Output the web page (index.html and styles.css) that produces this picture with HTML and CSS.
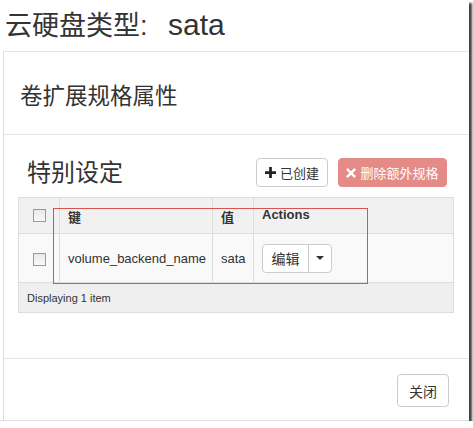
FILE: index.html
```html
<!DOCTYPE html>
<html lang="zh-CN">
<head>
  <meta charset="UTF-8" />
  <title>云硬盘类型: sata</title>
  <link rel="stylesheet" href="styles.css">
</head>
<body>
  <div class="frame">
    <!-- modal header -->
    <div class="modal-title">云硬盘类型: <span class="type-name">sata</span></div>

    <div class="modal-box">
      <div class="section-head">卷扩展规格属性</div>

      <div class="section-body">
        <div class="table-bar">
          <h3 class="table-title">特别设定</h3>
          <div class="table-actions">
            <button class="btn">
              <svg class="ico" viewBox="0 0 12 12" width="11" height="11"><path d="M4.5 0h3v4.5H12v3H7.5V12h-3V7.5H0v-3h4.5z" fill="#222"/></svg>
              已创建
            </button>
            <button class="btn btn-danger" disabled>
              <svg class="ico" viewBox="0 0 12 12" width="10" height="10"><path d="M2 0l4 4 4-4 2 2-4 4 4 4-2 2-4-4-4 4-2-2 4-4-4-4z" fill="#fff"/></svg>
              删除额外规格
            </button>
          </div>
        </div>

        <table class="data-table">
          <colgroup>
            <col style="width: 41px">
            <col style="width: 153px">
            <col style="width: 41px">
            <col style="width: 200px">
          </colgroup>
          <thead>
            <tr>
              <th class="col-check"><span class="checkbox"></span></th>
              <th>键</th>
              <th>值</th>
              <th>Actions</th>
            </tr>
          </thead>
          <tbody>
            <tr>
              <td class="col-check"><span class="checkbox"></span></td>
              <td>volume_backend_name</td>
              <td>sata</td>
              <td>
                <div class="btn-group">
                  <button class="btn btn-sm">编辑</button>
                  <button class="btn btn-sm btn-caret"><span class="caret"></span></button>
                </div>
              </td>
            </tr>
          </tbody>
          <tfoot>
            <tr>
              <td colspan="4">Displaying 1 item</td>
            </tr>
          </tfoot>
        </table>
      </div>

      <div class="modal-footer">
        <button class="btn btn-close">关闭</button>
      </div>
    </div>

    <!-- red annotation box drawn over the table -->
    <div class="mark"></div>
  </div>
</body>
</html>
```

FILE: styles.css
```css
* {
  box-sizing: border-box;
}

body {
  margin: 0;
  background: #fff;
  font-family: "Liberation Sans", "Noto Sans CJK SC", sans-serif;
  color: #333;
}

/* screenshot frame with shadow */
.frame {
  position: relative;
  width: 469px;
  height: 421px;
  border-bottom: 1px solid #ddd;
  box-shadow: 3px 3px 2px rgba(0, 0, 0, 0.75);
  display: flex;
  flex-direction: column;
}

.modal-title {
  height: 51px;
  padding: 9px 0 0 5px;
  font-size: 27px;
  line-height: 32px;
  color: #333;
  white-space: nowrap;
}

.type-name {
  margin-left: 13px;
  font-size: 30px;
}

.modal-box {
  flex: 1;
  margin-left: 3px;
  border-left: 1px solid #ddd;
  border-top: 1px solid #e5e5e5;
  display: flex;
  flex-direction: column;
}

.section-head {
  height: 83px;
  padding: 33px 0 0 16px;
  font-size: 22.5px;
  line-height: 24px;
  border-bottom: 1px solid #e5e5e5;
}

.section-body {
  height: 224px;
  padding: 23px 15px 0 14px;
  border-bottom: 1px solid #e5e5e5;
}

.table-bar {
  display: flex;
  justify-content: space-between;
  align-items: center;
  height: 29px;
  margin-bottom: 10px;
}

.table-title {
  margin: 0 0 0 9px;
  font-size: 24px;
  font-weight: normal;
  line-height: 28px;
}

.table-actions {
  display: flex;
  gap: 10px;
  margin-right: 7px;
}

.btn {
  display: inline-flex;
  align-items: center;
  justify-content: center;
  gap: 4px;
  height: 29px;
  padding: 0;
  font-family: "Liberation Sans", "Noto Sans CJK SC", sans-serif;
  font-size: 13px;
  color: #333;
  white-space: nowrap;
  background: #fff;
  border: 1px solid #ccc;
  border-radius: 4px;
}

.table-actions .btn {
  width: 72px;
}

.table-actions .btn-danger {
  width: 109px;
  color: #fff;
  background: #e48b88;
  border-color: #e48b88;
}

.ico {
  flex: none;
}

/* table */
.data-table {
  width: 435px;
  table-layout: fixed;
  border-collapse: collapse;
  font-size: 13px;
}

.data-table th,
.data-table td {
  border: 1px solid #ddd;
  padding: 0 8px;
  text-align: left;
  white-space: nowrap;
}

.data-table thead tr {
  height: 36px;
  background: #f1f1f1;
}

.data-table th {
  font-weight: bold;
  vertical-align: top;
  padding-top: 9px;
}

.data-table tbody tr {
  height: 49px;
  background: #f9f9f9;
}

.data-table tfoot tr {
  height: 30px;
  background: #efefef;
}

.data-table tfoot td {
  font-size: 11px;
  padding-top: 1px;
}

.data-table .col-check {
  text-align: center;
}

.checkbox {
  display: inline-block;
  width: 13px;
  height: 13px;
  border: 1px solid #999;
  background: linear-gradient(#e8e8e8, #fafafa);
  vertical-align: middle;
}

.btn-group {
  display: flex;
}

.btn-sm {
  height: 29px;
  font-size: 14px;
}

.btn-group .btn-sm:first-child {
  width: 47px;
  border-radius: 4px 0 0 4px;
}

.btn-group .btn-caret {
  width: 24px;
  margin-left: -1px;
  border-radius: 0 4px 4px 0;
}

.caret {
  width: 0;
  height: 0;
  border-left: 4px solid transparent;
  border-right: 4px solid transparent;
  border-top: 4px solid #333;
}

.modal-footer {
  flex: 1;
  display: flex;
  justify-content: flex-end;
  align-items: flex-start;
  padding: 15px 20px 0 0;
}

.btn-close {
  width: 52px;
  height: 33px;
  font-size: 14px;
}

/* annotation */
.mark {
  position: absolute;
  left: 53px;
  top: 208px;
  width: 315px;
  height: 76px;
  border: 1px solid #d9534f;
}
```
